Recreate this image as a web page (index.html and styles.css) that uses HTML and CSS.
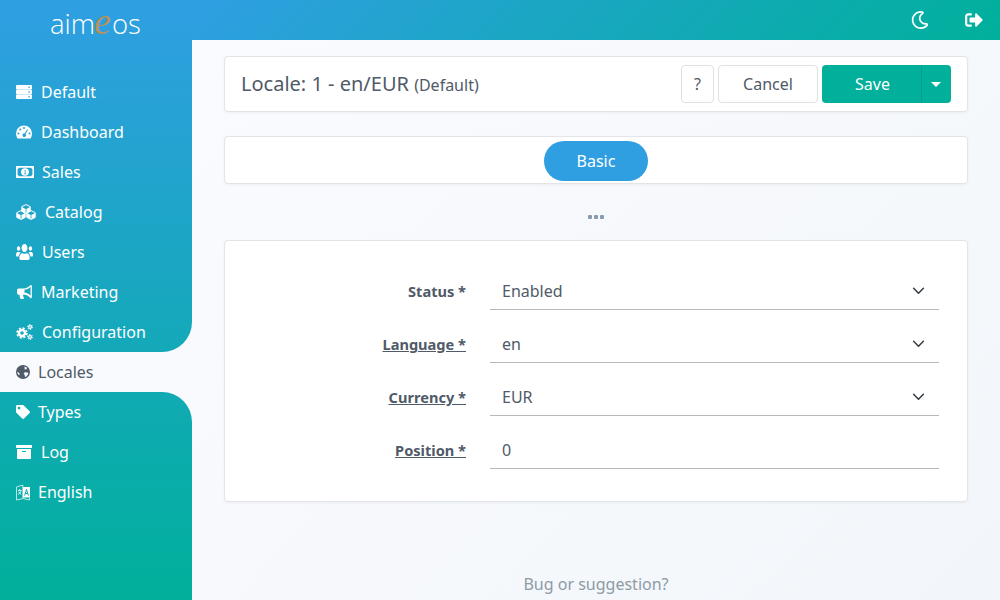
FILE: index.html
```html
<!DOCTYPE html>
<html lang="en">
<head>
<meta charset="utf-8">
<title>Locale: 1 - en/EUR</title>
<link rel="stylesheet" href="styles.css">
</head>
<body>
<div class="app">
  <aside class="sidebar">
    <div class="group group-top">
      <div class="logo"><span>aim</span><em>e</em><span>os</span></div>
      <nav class="menu">
        <a class="item item-wide"><svg width="16" height="14" viewBox="0 0 16 14"><path fill="#fff" fill-rule="evenodd" d="M1 0h14a1 1 0 0 1 1 1v2.400a1 1 0 0 1-1 1H1a1 1 0 0 1-1-1V1a1 1 0 0 1 1-1zm11.500 1.500v1.400h1.200V1.500zM1 4.800h14a1 1 0 0 1 1 1v2.400a1 1 0 0 1-1 1H1a1 1 0 0 1-1-1V5.800a1 1 0 0 1 1-1zm11.500 1.500v1.400h1.200V6.300zM1 9.600h14a1 1 0 0 1 1 1V13a1 1 0 0 1-1 1H1a1 1 0 0 1-1-1v-2.400a1 1 0 0 1 1-1zm11.500 1.500v1.400h1.200v-1.400z"/></svg>Default</a>
        <a class="item item-wide"><svg width="16" height="14" viewBox="0 0 16 14"><path fill="#fff" fill-rule="evenodd" d="M8 .5a8 8 0 0 1 8 8c0 1.800-.5 3.300-1.300 4.700-.2.300-.5.300-.8.300H2.100c-.3 0-.6 0-.8-.3A8.600 8.600 0 0 1 0 8.500a8 8 0 0 1 8-8zM8 2a1 1 0 1 0 0 2 1 1 0 0 0 0-2zM4.200 3.600a1 1 0 1 0 0 2 1 1 0 0 0 0-2zM2.500 7.600a1 1 0 1 0 0 2 1 1 0 0 0 0-2zM13.500 7.600a1 1 0 1 0 0 2 1 1 0 0 0 0-2zM11.300 4.300L8.500 8.500a1.700 1.700 0 1 0 1 .5l2.600-4.200z"/></svg>Dashboard</a>
        <a class="item"><svg width="18" height="12" viewBox="0 0 17 12" preserveAspectRatio="none"><path fill="#fff" fill-rule="evenodd" d="M0 0h17v12H0zM2.800 1.800A2 2 0 0 1 1.500 3v6a2 2 0 0 1 1.300 1.200h11.400A2 2 0 0 1 15.500 9V3a2 2 0 0 1-1.300-1.200zM8.500 2.300a3.700 3.700 0 1 1 0 7.400 3.700 3.700 0 0 1 0-7.400zM8 4v.8h.3v2.700H7.700v.8h1.900v-.8H9V4z"/></svg>Sales</a>
        <a class="item"><svg width="21" height="16" viewBox="0 0 21 16"><g fill="none" stroke="#fff" stroke-width="1" stroke-linejoin="round"><path d="M10 .6l4.200 2v4.800L10 9.400 5.800 7.400V2.600z"/><path d="M5 6.600l4.200 2v4.800L5 15.400.8 13.400V8.600z"/><path d="M15 6.600l4.200 2v4.800L15 15.400l-4.200-2V8.600z"/></g><path fill="#fff" d="M10.400 5l3.800-1.900v4.300L10.400 9.200zM9.600 5L5.800 3.100v4.300l3.800 1.800zM5.400 11l3.800-1.900v4.300l-3.800 1.800zM4.600 11L.8 9.100v4.300l3.800 1.800zM15.400 11l3.800-1.900v4.300l-3.800 1.800zM14.600 11l-3.800-1.900v4.300l3.800 1.800z"/></svg>Catalog</a>
        <a class="item item-wide"><svg width="17" height="16" viewBox="0 32 640 448" preserveAspectRatio="none"><path fill="#fff" d="M96 224c35.300 0 64-28.700 64-64s-28.700-64-64-64-64 28.700-64 64 28.700 64 64 64zm448 0c35.300 0 64-28.700 64-64s-28.700-64-64-64-64 28.700-64 64 28.700 64 64 64zm32 32h-64c-17.600 0-33.500 7.100-45.100 18.600 40.300 22.100 68.900 62 75.100 109.400h66c17.700 0 32-14.300 32-32v-32c0-35.300-28.700-64-64-64zm-256 0c61.900 0 112-50.100 112-112S381.900 32 320 32 208 82.100 208 144s50.100 112 112 112zm76.800 32h-8.300c-20.800 10-43.900 16-68.500 16s-47.600-6-68.500-16h-8.300C179.600 288 128 339.600 128 403.200V432c0 26.500 21.500 48 48 48h288c26.500 0 48-21.500 48-48v-28.800c0-63.600-51.600-115.200-115.200-115.200zm-223.700-13.400C161.500 263.100 145.600 256 128 256H64c-35.300 0-64 28.700-64 64v32c0 17.700 14.300 32 32 32h65.900c6.300-47.400 34.900-87.300 75.200-109.400z"/></svg>Users</a>
        <a class="item item-wide"><svg width="16" height="14" viewBox="0 0 576 512"><path fill="#fff" fill-rule="evenodd" d="M576 208V32c0-17.700-14.300-32-32-32-7.100 0-14.200 2.400-20 7l-85 68C395.900 109.300 341.900 128 287 128H96c-35.300 0-64 28.700-64 64v96c0 35.300 28.700 64 64 64h33.700c-1.400 10.500-2.200 21.100-2.200 32 0 39.800 9.300 77.300 25.600 110.900 5.200 10.700 16.500 17.100 28.400 17.100h74.300c26 0 41.700-29.800 25.900-50.600-16.400-21.500-26.200-48.400-26.200-77.400 0-11.100 1.600-21.800 4.400-32H287c54.900 0 108.900 18.700 152 53l85 68a32 32 0 0 0 20 7c17.600 0 32-14.300 32-32V208zM528 66.600l-49 39.400c-47 37.600-108 60-173 60v117c65 0 126 22.400 173 60l49 39.400z"/></svg>Marketing</a>
        <a class="item item-wide"><svg width="17" height="16" viewBox="0 0 17 16"><g fill="none" stroke="#fff"><circle cx="6" cy="9" r="3" stroke-width="2.400"/><circle cx="6" cy="9" r="4.900" stroke-width="1.600" stroke-dasharray="2.200 1.650"/><circle cx="14" cy="3" r="1.400" stroke-width="1.200"/><circle cx="14" cy="3" r="2.500" stroke-width="1" stroke-dasharray="1.300 1.320"/><circle cx="14" cy="13" r="1.400" stroke-width="1.200"/><circle cx="14" cy="13" r="2.500" stroke-width="1" stroke-dasharray="1.300 1.320"/></g></svg>Configuration</a>
      </nav>
    </div>
    <a class="item item-active"><svg width="14" height="14" viewBox="0 0 14 14"><circle cx="7" cy="7" r="7" fill="#4f5a69"/><path fill="#f8f9fc" d="M8.500 1.500l2.700 1.300-.8 1.400-1.700.2zM8.800 7.200l2.900.4.700 1.100-2 2.900-1.300.5-.4-2.200-1-1.400zM1.300 6.700l1.700 1 .7 1.400-.5 1.200-1.400-1.300z"/></svg>Locales</a>
    <div class="group group-bottom">
      <nav class="menu">
        <a class="item"><svg width="14" height="14" viewBox="0 0 512 512"><path fill="#fff" d="M0 252.118V48C0 21.490 21.490 0 48 0h204.118a48 48 0 0 1 33.941 14.059l211.882 211.882c18.745 18.745 18.745 49.137 0 67.882L293.823 497.941c-18.745 18.745-49.137 18.745-67.882 0L14.059 286.059A48 48 0 0 1 0 252.118zM112 64c-26.510 0-48 21.490-48 48s21.490 48 48 48 48-21.490 48-48-21.490-48-48-48z"/></svg>Types</a>
        <a class="item item-wide"><svg width="16" height="16" viewBox="0 0 512 512"><path fill="#fff" d="M32 448c0 17.700 14.300 32 32 32h384c17.700 0 32-14.300 32-32V160H32v288zm160-212c0-6.600 5.400-12 12-12h104c6.600 0 12 5.400 12 12v8c0 6.600-5.400 12-12 12H204c-6.600 0-12-5.400-12-12v-8zM480 32H32C14.300 32 0 46.300 0 64v48c0 8.800 7.200 16 16 16h480c8.800 0 16-7.200 16-16V64c0-17.700-14.300-32-32-32z"/></svg>Log</a>
        <a class="item"><svg width="14" height="17" viewBox="0 0 14 17"><path fill="none" stroke="#cdeff0" stroke-width=".9" d="M.5 3l6.300-2v13.500L.5 16zM7 14.500l6.500 1.500v-2"/><path fill="#fff" d="M7 3h7v10.500H7z"/><path fill="none" stroke="#0aabab" stroke-width="1" d="M8.600 11.500l1.900-6 1.900 6M9.300 9.500h2.400"/><path fill="none" stroke="#e6f8f8" stroke-width=".9" d="M2 6.500h3.500M3.700 5v1.500M4.800 6.800c-.4 1.700-1.300 3-2.700 3.700M2.700 7.800c.5 1.100 1.300 2 2.600 2.500"/></svg>English</a>
      </nav>
    </div>
  </aside>
  <div class="content">
    <header class="topbar">
      <svg width="18" height="20" viewBox="0 0 512 512" class="top-icon"><path fill="#fff" d="M279.135 512c78.756 0 150.982-35.804 198.844-94.775 28.270-34.831-2.558-85.722-46.249-77.401-82.348 15.683-158.272-47.268-158.272-130.792 0-48.424 26.060-92.292 67.434-115.836 38.745-22.050 28.999-80.788-15.022-88.919A257.936 257.936 0 0 0 279.135 0c-141.360 0-256 114.575-256 256 0 141.360 114.576 256 256 256zm0-464c12.985 0 25.689 1.201 38.016 3.478-54.760 31.163-91.693 90.042-91.693 157.554 0 113.848 103.641 199.200 215.252 177.944C402.574 433.964 344.366 464 279.135 464c-114.875 0-208-93.125-208-208s93.125-208 208-208z"/></svg>
      <svg width="18" height="18" viewBox="0 0 512 512" class="top-icon"><path fill="#fff" d="M497 273L329 441c-15 15-41 4.500-41-17v-96H152c-13.300 0-24-10.700-24-24v-96c0-13.300 10.700-24 24-24h136V88c0-21.400 25.900-32 41-17l168 168c9.300 9.400 9.300 24.600 0 34zM192 436v-40c0-6.600-5.400-12-12-12H96c-17.700 0-32-14.300-32-32V160c0-17.700 14.300-32 32-32h84c6.600 0 12-5.400 12-12V76c0-6.600-5.400-12-12-12H96c-53 0-96 43-96 96v192c0 53 43 96 96 96h84c6.600 0 12-5.400 12-12z"/></svg>
    </header>
    <main class="main">
      <section class="card titlebar">
        <h1 class="title">Locale: 1 - en/EUR <small>(Default)</small></h1>
        <div class="actions">
          <button class="btn btn-light btn-help">?</button>
          <button class="btn btn-light btn-cancel">Cancel</button>
          <div class="split">
            <button class="btn btn-save">Save</button>
            <button class="btn btn-caret"><span class="caret"></span></button>
          </div>
        </div>
      </section>
      <section class="card tabs"><a class="tab">Basic</a></section>
      <div class="more"><span></span><span></span><span></span></div>
      <form class="card form">
        <div class="row"><label class="label">Status *</label><select class="field"><option>Enabled</option></select></div>
        <div class="row"><label class="label label-u">Language *</label><select class="field"><option>en</option></select></div>
        <div class="row"><label class="label label-u">Currency *</label><select class="field"><option>EUR</option></select></div>
        <div class="row"><label class="label label-u">Position *</label><input class="field" value="0"></div>
      </form>
      <footer class="footer">Bug or suggestion?</footer>
    </main>
  </div>
</div>
</body>
</html>
```
FILE: styles.css
```css
* { box-sizing: border-box; }
html, body { margin: 0; height: 100%; overflow: hidden; }
body { font-family: "Noto Sans", sans-serif; font-size: 16px; color: #505a68; background: #f6f8fb; }
.app { display: flex; height: 600px; }
.sidebar { width: 192px; flex: none; display: flex; flex-direction: column; background: #f9fafd; }
.group { background: linear-gradient(180deg, #2f9fe2 0, #00b09b 600px) fixed; background-size: 192px 600px; background-repeat: no-repeat; }
.group-top { height: 352px; border-bottom-right-radius: 30px; }
.group-bottom { flex: 1; border-top-right-radius: 30px; }
.logo { height: 72px; display: flex; align-items: baseline; padding: 2px 0 0 50px; font-family: "Open Sans", sans-serif; font-weight: 300; font-size: 27.5px; line-height: 38px; color: #fff; }
.logo em { font-family: "Liberation Serif", serif; font-style: italic; color: #b8925a; font-size: 38px; margin: 0 1px 0 -1px; }
.menu { display: flex; flex-direction: column; }
.item { display: flex; align-items: center; gap: 8px; height: 40px; padding-left: 16px; color: #fff; }
.item-wide { gap: 9px; }
.item-active { color: #505a68; background: #f9fafd; }
.content { flex: 1; min-width: 0; display: flex; flex-direction: column; }
.topbar { height: 40px; flex: none; display: flex; align-items: center; justify-content: flex-end; gap: 36px; padding-right: 17px; background: linear-gradient(135deg, #2f9fe2, #00b09b); }
.top-icon { display: block; }
.main { flex: 1; display: flex; flex-direction: column; padding: 16px 32px 4px; background: linear-gradient(135deg, #fafbfe, #f2f6fa); }
.card { background: #fff; border: 1px solid #e2e4e8; border-radius: 4px; box-shadow: 0 1px 3px rgba(0, 0, 0, .05); }
.titlebar { height: 56px; display: flex; align-items: center; justify-content: space-between; padding: 0 16px; }
.title { margin: 0 0 2px; font-size: 20px; font-weight: 400; color: #505a68; }
.title small { font-size: 16px; }
.actions { display: flex; gap: 4px; }
.btn { height: 38px; border-radius: 4px; border: 1px solid transparent; font: 400 16px "Noto Sans", sans-serif; padding: 0; }
.btn-light { background: #fff; border-color: #dfe1e5; color: #505a68; }
.btn-help { width: 33px; }
.btn-cancel { width: 100px; }
.split { display: flex; }
.btn-save { width: 99px; padding-left: 2px; background: #00b09b; color: #fff; border-radius: 4px 0 0 4px; }
.btn-caret { width: 30px; background: #00b09b; border-left-color: #0a9c8b; border-radius: 0 4px 4px 0; display: flex; align-items: center; justify-content: center; }
.caret { width: 0; height: 0; border: 5px solid transparent; border-top-color: #fff; border-bottom-width: 0; }
.tabs { height: 48px; margin-top: 24px; display: flex; justify-content: center; align-items: flex-start; padding-top: 4px; }
.tab { width: 104px; height: 40px; border-radius: 20px; background: #2f9fe2; color: #fff; display: flex; align-items: center; justify-content: center; }
.more { height: 56px; padding-top: 10px; display: flex; justify-content: center; align-items: center; gap: 2px; }
.more span { width: 4px; height: 4px; border-radius: 1px; background: #8a9bb0; }
.form { padding: 31px 28px 32px 0; display: flex; flex-direction: column; gap: 15px; }
.row { display: flex; align-items: center; gap: 24px; }
.label { width: 241px; flex: none; text-align: right; font-size: 14.6px; font-weight: 700; color: #505a68; }
.label-u { text-decoration: underline; }
.field { flex: 1; min-width: 0; height: 38px; border: 0; border-bottom: 1px solid #b5b8bc; border-radius: 0; padding: 0 12px; background-color: #fff; font: 400 16px "Noto Sans", sans-serif; color: #505a68; outline: 0; }
select.field { appearance: none; background-image: url("data:image/svg+xml,%3Csvg xmlns='http://www.w3.org/2000/svg' width='13' height='8' viewBox='0 0 14 9'%3E%3Cpath d='M1.500 1.500L7 7l5.500-5.500' fill='none' stroke='%23343a40' stroke-width='1.700' stroke-linecap='round' stroke-linejoin='round'/%3E%3C/svg%3E"); background-repeat: no-repeat; background-position: right 14px center; }
.footer { margin-top: auto; text-align: center; line-height: 24px; color: #8d9ba6; }
```
